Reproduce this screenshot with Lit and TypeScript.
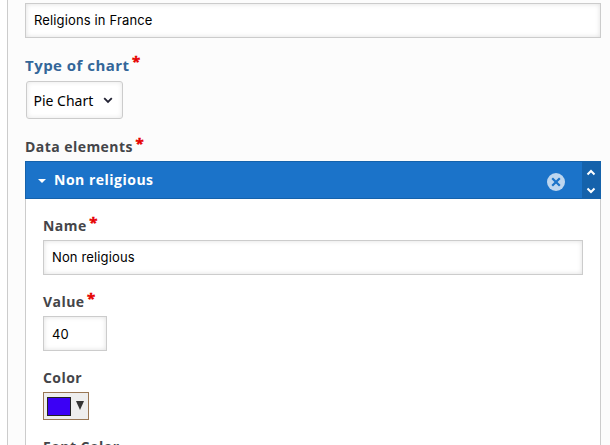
import { LitElement, html, css } from "lit";
import { customElement, property } from "lit/decorators.js";

@customElement("field-label")
class FieldLabel extends LitElement {
  @property() text = "";
  @property({ type: Boolean }) required = false;
  static styles = css`
    :host { display: flex; height: 20px; line-height: 20px; white-space: nowrap;
      font-family: "Open Sans", "Noto Sans", sans-serif; font-weight: 700; font-size: var(--size, 14px);
      letter-spacing: var(--track, 0.45px); color: var(--label-color, #444549); }
    .star { color: #e60000; font-size: 15px; line-height: 12px; margin-left: 2.5px; letter-spacing: 0;
      -webkit-text-stroke: 0.5px #e60000; }
  `;
  render() {
    return html`<span>${this.text}</span>${this.required ? html`<span class="star">*</span>` : ""}`;
  }
}

@customElement("app-root")
class AppRoot extends LitElement {
  static styles = css`
    * { box-sizing: border-box; }
    :host { display: block; height: 445px; overflow: hidden; background: #fff; }
    .panel { margin-left: 7px; height: 445px; border-left: 1px solid #ccc; background: #fcfcfc;
      padding: 3px 9px 0 17px; overflow: hidden; }
    .input { height: 35px; border: 1px solid #ccc; background: #fff; color: #000;
      box-shadow: inset 0 0 5px rgba(0, 0, 0, 0.13); padding-left: 8px;
      font: 13px/33px Inter, "Liberation Sans", sans-serif; letter-spacing: 0.14px; white-space: nowrap; }
    .type { --label-color: #336699; --size: 15px; --track: 0.47px; margin-top: 17px; }
    .select { margin: 6px 0 0 1px; width: 97px; height: 38px; border: 1px solid #ccc; border-radius: 3px;
      background: #fff; box-shadow: inset 0 0 5px rgba(0, 0, 0, 0.1); display: flex; align-items: center;
      justify-content: space-between; padding: 0 9px 0 6.5px; color: #000;
      font: 14px "Noto Sans", sans-serif; }
    .data { margin-top: 18px; }
    .header { margin-top: 4px; height: 38px; background: #1b73c9; border: 1px solid #1562ab; display: flex;
      align-items: center; color: #fff; font: 700 14px "Open Sans", sans-serif; letter-spacing: 0.5px; }
    .caret { margin: 2px 8px 0 12px; }
    .title { flex: 1; margin-top: -2px; }
    .close { margin: 3px 17px 0 0; }
    .move { width: 18px; height: 36px; background: #1562ab; }
    svg { display: block; }
    .select svg { margin-top: 1px; }
    .body { border: 1px solid #ccc; border-top: 0; background: #fff; height: 300px; padding: 17px 17px 0; }
    .body .input { margin-top: 4px; }
    .value { margin-top: 17px; }
    .body .small { width: 64px; line-height: 35px; }
    .color { margin-top: 17px; }
    .picker { margin-top: 4px; width: 46px; height: 28px; border: 1px solid #997755; background: #eee;
      display: flex; align-items: center; padding-left: 3px; gap: 5px; }
    .swatch { width: 24px; height: 19px; border: 1px solid #222; background: #3b00f5; margin-top: 1px; }
    .picker svg { margin-top: -1px; }
  `;
  render() {
    return html`<div class="panel">
      <div class="input">Religions in France</div>
      <field-label class="type" text="Type of chart" required></field-label>
      <div class="select"><span>Pie Chart</span>
        <svg width="10" height="7" viewBox="0 0 10 7"><path d="M1.2 1.2 5 5l3.8-3.8" fill="none" stroke="#223" stroke-width="1.8"/></svg>
      </div>
      <field-label class="data" text="Data elements" required></field-label>
      <div class="header">
        <svg class="caret" width="8" height="4" viewBox="0 0 8 4"><path d="M0 0h8L4 4z" fill="#fff"/></svg>
        <span class="title">Non religious</span>
        <svg class="close" width="18" height="18" viewBox="0 0 18 18"><circle cx="9" cy="9" r="9" fill="#bdd6ef"/><path d="m5.2 5.2 7.6 7.6m0-7.6-7.6 7.6" stroke="#1b73c9" stroke-width="2.2"/></svg>
        <div class="move"><svg width="18" height="36" viewBox="0 0 18 36"><path d="m5.5 12.5 3.5-3.5 3.5 3.5M5.5 26.5 9 30l3.5-3.5" fill="none" stroke="#fff" stroke-width="2"/></svg></div>
      </div>
      <div class="body">
        <field-label text="Name" required></field-label>
        <div class="input">Non religious</div>
        <field-label class="value" text="Value" required></field-label>
        <div class="input small">40</div>
        <field-label class="color" text="Color"></field-label>
        <div class="picker"><div class="swatch"></div>
          <svg width="8" height="9" viewBox="0 0 8 9"><path d="M0 0h8L4 9z" fill="#333"/></svg></div>
        <field-label class="color" text="Font Color"></field-label>
      </div>
    </div>`;
  }
}
